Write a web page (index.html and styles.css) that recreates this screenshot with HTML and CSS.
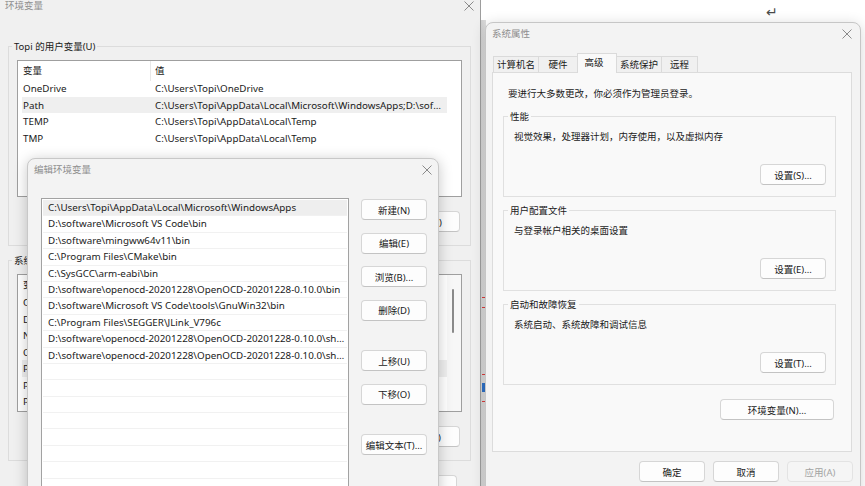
FILE: index.html
```html
<!DOCTYPE html>
<html lang="zh-CN">
<head>
<meta charset="utf-8">
<title>环境变量</title>
<link rel="stylesheet" href="styles.css">
</head>
<body>
<div class="desktop">
  <div class="backstrip"></div>
  <span class="enter-glyph">↵</span>

  <!-- 环境变量 (background window) -->
  <section class="win env">
    <div class="titlebar env-title">
      <span class="title-text">环境变量</span>
      <svg class="close" viewBox="0 0 10 10" width="10" height="10"><path d="M0.5 0.5L9.5 9.5M9.5 0.5L0.5 9.5"/></svg>
    </div>
    <div class="env-body">
      <fieldset class="group env-group">
        <legend>Topi 的用户变量(U)</legend>
        <div class="lv">
          <div class="lv-head"><span class="col1">变量</span><span class="col2">值</span></div>
          <div class="lv-row"><span class="c1">OneDrive</span><span class="c2">C:\Users\Topi\OneDrive</span></div>
          <div class="lv-row sel"><span class="c1">Path</span><span class="c2">C:\Users\Topi\AppData\Local\Microsoft\WindowsApps;D:\software\Microsoft VS Code\bin;D:\software\mingww64v11\bin</span></div>
          <div class="lv-row"><span class="c1">TEMP</span><span class="c2">C:\Users\Topi\AppData\Local\Temp</span></div>
          <div class="lv-row"><span class="c1">TMP</span><span class="c2">C:\Users\Topi\AppData\Local\Temp</span></div>
        </div>
        <div class="btnrow">
          <button class="btn w68">新建(N)...</button>
          <button class="btn w68">编辑(E)...</button>
          <button class="btn w68">删除(D)</button>
        </div>
      </fieldset>

      <fieldset class="group env-group sys-vars">
        <legend>系统变量(S)</legend>
        <div class="lv lv-sys">
          <div class="lv-scroll"><span class="thumb"></span></div>
          <div class="lv-head"><span class="col1">变量</span><span class="col2">值</span></div>
          <div class="lv-row"><span class="c1">ComSpec</span><span class="c2">C:\Windows\system32\cmd.exe</span></div>
          <div class="lv-row"><span class="c1">DriverData</span><span class="c2">C:\Windows\System32\Drivers\DriverData</span></div>
          <div class="lv-row"><span class="c1">NUMBER_OF_PROCESSORS</span><span class="c2">16</span></div>
          <div class="lv-row"><span class="c1">OS</span><span class="c2">Windows_NT</span></div>
          <div class="lv-row sel"><span class="c1">Path</span><span class="c2">C:\Windows\system32;C:\Windows;C:\Windows\System32\Wbem</span></div>
          <div class="lv-row"><span class="c1">PATHEXT</span><span class="c2">.COM;.EXE;.BAT;.CMD;.VBS;.VBE;.JS;.JSE;.WSF;.WSH;.MSC</span></div>
          <div class="lv-row"><span class="c1">PROCESSOR_ARCHITECTURE</span><span class="c2">AMD64</span></div>
        </div>
        <div class="btnrow">
          <button class="btn w68">新建(W)...</button>
          <button class="btn w68">编辑(I)...</button>
          <button class="btn w68">删除(L)</button>
        </div>
      </fieldset>

      <div class="btnrow env-bottom">
        <button class="btn w68">确定</button>
        <button class="btn w68">取消</button>
      </div>
    </div>
  </section>

  <!-- 编辑环境变量 dialog -->
  <section class="win edit">
    <div class="titlebar edit-title">
      <span class="title-text">编辑环境变量</span>
      <svg class="close" viewBox="0 0 10 10" width="10" height="10"><path d="M0.5 0.5L9.5 9.5M9.5 0.5L0.5 9.5"/></svg>
    </div>
    <div class="edit-body">
      <div class="path-list">
        <div class="prow sel">C:\Users\Topi\AppData\Local\Microsoft\WindowsApps</div>
        <div class="prow">D:\software\Microsoft VS Code\bin</div>
        <div class="prow">D:\software\mingww64v11\bin</div>
        <div class="prow">C:\Program Files\CMake\bin</div>
        <div class="prow">C:\SysGCC\arm-eabi\bin</div>
        <div class="prow">D:\software\openocd-20201228\OpenOCD-20201228-0.10.0\bin</div>
        <div class="prow">D:\software\Microsoft VS Code\tools\GnuWin32\bin</div>
        <div class="prow">C:\Program Files\SEGGER\JLink_V796c</div>
        <div class="prow">D:\software\openocd-20201228\OpenOCD-20201228-0.10.0\share\openocd\scripts</div>
        <div class="prow">D:\software\openocd-20201228\OpenOCD-20201228-0.10.0\share\openocd\contrib</div>
        <div class="prow"></div>
        <div class="prow"></div>
        <div class="prow"></div>
        <div class="prow"></div>
        <div class="prow"></div>
        <div class="prow"></div>
        <div class="prow"></div>
        <div class="prow"></div>
        <div class="prow"></div>
      </div>
      <div class="edit-btns">
        <button class="btn">新建(N)</button>
        <button class="btn">编辑(E)</button>
        <button class="btn">浏览(B)...</button>
        <button class="btn">删除(D)</button>
        <button class="btn gap-big">上移(U)</button>
        <button class="btn">下移(O)</button>
        <button class="btn gap-big">编辑文本(T)...</button>
      </div>
    </div>
  </section>

  <!-- 系统属性 window -->
  <section class="win sys">
    <div class="titlebar sys-title">
      <span class="title-text">系统属性</span>
      <svg class="close" viewBox="0 0 10 10" width="10" height="10"><path d="M0.5 0.5L9.5 9.5M9.5 0.5L0.5 9.5"/></svg>
    </div>
    <div class="sys-body">
      <div class="tabs">
        <span class="tab t45">计算机名</span>
        <span class="tab t39">硬件</span>
        <span class="tab t39 active">高级</span>
        <span class="tab t45">系统保护</span>
        <span class="tab t36">远程</span>
      </div>
      <div class="panel">
        <p class="admin-note">要进行大多数更改，你必须作为管理员登录。</p>
        <fieldset class="group sgroup">
          <legend>性能</legend>
          <p class="gtext">视觉效果，处理器计划，内存使用，以及虚拟内存</p>
          <div class="gbtn"><button class="btn w66">设置(S)...</button></div>
        </fieldset>
        <fieldset class="group sgroup">
          <legend>用户配置文件</legend>
          <p class="gtext">与登录帐户相关的桌面设置</p>
          <div class="gbtn"><button class="btn w66">设置(E)...</button></div>
        </fieldset>
        <fieldset class="group sgroup">
          <legend>启动和故障恢复</legend>
          <p class="gtext">系统启动、系统故障和调试信息</p>
          <div class="gbtn"><button class="btn w66">设置(T)...</button></div>
        </fieldset>
        <div class="envbtn-row"><button class="btn envbtn">环境变量(N)...</button></div>
      </div>
      <div class="sys-footer">
        <button class="btn w66">确定</button>
        <button class="btn w66">取消</button>
        <button class="btn w66 disabled">应用(A)</button>
      </div>
    </div>
  </section>
</div>
</body>
</html>
```

FILE: styles.css
```css
* { box-sizing: border-box; }
html, body { margin: 0; padding: 0; }
body {
  width: 865px;
  height: 486px;
  overflow: hidden;
  background: #ffffff;
  font-family: "Noto Sans", "Noto Sans CJK SC", sans-serif;
  font-size: 9.5px;
  color: #1a1a1a;
}
p { margin: 0; }
button { font: inherit; color: inherit; }

.desktop {
  position: relative;
  width: 865px;
  height: 486px;
  overflow: hidden;
  background: #ffffff;
}

/* glimpse of an editor window behind */
.backstrip {
  position: absolute;
  left: 480px;
  top: 0;
  width: 6px;
  height: 486px;
  border-left: 1px solid #9d9d9d;
  background:
    linear-gradient(#ffffff, #ffffff) 0 0 / 100% 20px no-repeat,
    linear-gradient(#d83b3b, #d83b3b) 1px 297px / 3px 1px no-repeat,
    linear-gradient(#d83b3b, #d83b3b) 1px 307px / 3px 1px no-repeat,
    linear-gradient(#d83b3b, #d83b3b) 1px 374px / 3px 1px no-repeat,
    linear-gradient(#2d6fc4, #2d6fc4) 1px 383px / 3px 9px no-repeat,
    linear-gradient(#d83b3b, #d83b3b) 1px 401px / 3px 1px no-repeat,
    linear-gradient(90deg, #cfcfcf, #dedede);
}

.enter-glyph {
  position: absolute;
  left: 766px;
  top: 4px;
  font-family: "DejaVu Sans", sans-serif;
  font-size: 14px;
  color: #4a4a4a;
  line-height: 16px;
}

.win { position: absolute; }

.titlebar {
  display: flex;
  justify-content: space-between;
  align-items: center;
  color: #8e8e8e;
}
.close { stroke: #8a8a8a; stroke-width: 1; fill: none; flex: none; }

/* ---------- env window ---------- */
.env {
  left: 0;
  top: 0;
  width: 480px;
  height: 486px;
  background: #f0f0f0;
}
.env-title {
  height: 12px;
  line-height: 12px;
  padding: 0 6px 0 5px;
}
.env-body {
  padding: 28px 9px 0 8px;
  display: flex;
  flex-direction: column;
}

.group {
  border: 1px solid #dcdcdc;
  margin: 0;
  min-width: 0;
}
.group legend {
  line-height: 13px;
  padding: 0 2px;
}
.env-group {
  padding: 7px 8px 13px 8px;
}
.env-group legend { margin-left: -5px; }
.sys-vars { margin-top: 8px; }

.lv {
  position: relative;
  height: 137px;
  border: 1px solid #9f9f9f;
  background: #ffffff;
  overflow: hidden;
}
.lv-sys { height: 138px; }
.lv-head {
  display: grid;
  grid-template-columns: 133px 1fr;
  width: 429px;
  height: 19px;
  line-height: 20px;
}
.lv-head .col1 { padding-left: 5px; border-right: 1px solid #e8e8e8; }
.lv-head .col2 { padding-left: 4px; }
.lv-row {
  display: grid;
  grid-template-columns: 133px 1fr;
  width: 425px;
  margin-left: 4px;
  height: 16.5px;
  line-height: 17px;
  font-size: 9.8px;
}
.lv-row span { white-space: nowrap; overflow: hidden; text-overflow: ellipsis; }
.lv-row .c1 { padding-left: 1px; }
.lv-row .c2 { padding-right: 6px; }
.lv-row.sel { background: #efefef; }

.lv-scroll {
  position: absolute;
  right: 0;
  top: 0;
  width: 14px;
  height: 100%;
  background: #f7f7f7;
}
.thumb {
  position: absolute;
  left: 5px;
  top: 14px;
  width: 2px;
  height: 44px;
  border-radius: 1px;
  background: #8a8a8a;
}

.btnrow {
  display: flex;
  justify-content: flex-end;
  gap: 8px;
  margin-top: 14px;
  padding-right: 2px;
}
.env-bottom { margin-top: 14px; padding-right: 14px; }

.btn {
  height: 21px;
  padding: 0;
  background: #fdfdfd;
  border: 1px solid #d6d6d6;
  border-bottom-color: #c3c3c3;
  border-radius: 4px;
  display: flex;
  align-items: center;
  justify-content: center;
  white-space: nowrap;
  flex: none;
}
.w68 { width: 68px; }
.w66 { width: 66px; }
.btn.disabled {
  background: #f5f5f5;
  color: #a3a3a3;
  border-color: #e3e3e3;
}

/* ---------- edit dialog ---------- */
.edit {
  left: 27px;
  top: 158px;
  width: 412px;
  height: 345px;
  background: #f3f3f3;
  border: 1px solid #c8c8c8;
  border-radius: 8px 8px 0 0;
  box-shadow: 0 2px 14px rgba(0, 0, 0, 0.22);
}
.edit-title {
  height: 21px;
  line-height: 21px;
  padding: 0 6px 0 6px;
}
.edit-body {
  display: flex;
  gap: 12px;
  padding: 18px 0 0 13px;
}
.path-list {
  width: 308px;
  height: 310px;
  border: 1px solid #a2a2a2;
  background: #ffffff;
  padding: 1px;
  overflow: hidden;
}
.prow {
  height: 16.4px;
  line-height: 16px;
  padding: 0 1px 0 5px;
  font-size: 9.8px;
  border-bottom: 1px solid #f1f1f1;
  white-space: nowrap;
  overflow: hidden;
  text-overflow: ellipsis;
}
.prow.sel { background: #eeeeee; }
.edit-btns {
  width: 66px;
  display: flex;
  flex-direction: column;
  gap: 12.5px;
  padding-top: 1px;
}
.edit-btns .btn { width: 66px; }
.edit-btns .gap-big { margin-top: 17px; }

/* ---------- system properties ---------- */
.sys {
  left: 485px;
  top: 22px;
  width: 376px;
  height: 480px;
  background: #f3f3f3;
  border: 1px solid #c6c6c6;
  border-radius: 8px 8px 0 0;
  box-shadow: 0 2px 14px rgba(0, 0, 0, 0.16);
}
.sys-title {
  height: 21px;
  line-height: 21px;
  padding: 0 8px 0 6px;
}
.sys-body {
  padding: 9px 8px 0 6px;
}
.tabs {
  display: flex;
  align-items: flex-end;
  height: 19px;
  margin-left: 1px;
  position: relative;
  z-index: 1;
}
.tab {
  height: 16px;
  line-height: 15px;
  text-align: center;
  background: #f0f0f0;
  border: 1px solid #dadada;
  border-bottom: none;
  margin-right: -1px;
}
.tab.active {
  height: 20px;
  line-height: 18px;
  background: #f9f9f9;
  margin-bottom: -1px;
  position: relative;
  text-indent: -6px;
}
.t45 { width: 46px; }
.t39 { width: 40px; }
.t36 { width: 37px; }

.panel {
  width: 360px;
  height: 380px;
  background: #f9f9f9;
  border: 1px solid #dcdcdc;
  padding: 14px 15px 0 10px;
  display: flex;
  flex-direction: column;
}
.admin-note {
  line-height: 13px;
  margin-left: 5px;
}
.sgroup {
  padding: 7px 9px 11px 10px;
  border-color: #e0e0e0;
  margin-top: 10px;
}
.sgroup + .sgroup { margin-top: 7px; }
.sgroup legend { margin-left: -6px; }
.gtext { line-height: 13px; }
.gbtn {
  display: flex;
  justify-content: flex-end;
  margin-top: 21px;
}
.envbtn-row {
  display: flex;
  justify-content: flex-end;
  margin-top: 14px;
  padding-right: 2px;
}
.envbtn { width: 114px; }

.sys-footer {
  display: flex;
  justify-content: flex-end;
  gap: 8px;
  margin-top: 9px;
  margin-right: -1px;
}
```
